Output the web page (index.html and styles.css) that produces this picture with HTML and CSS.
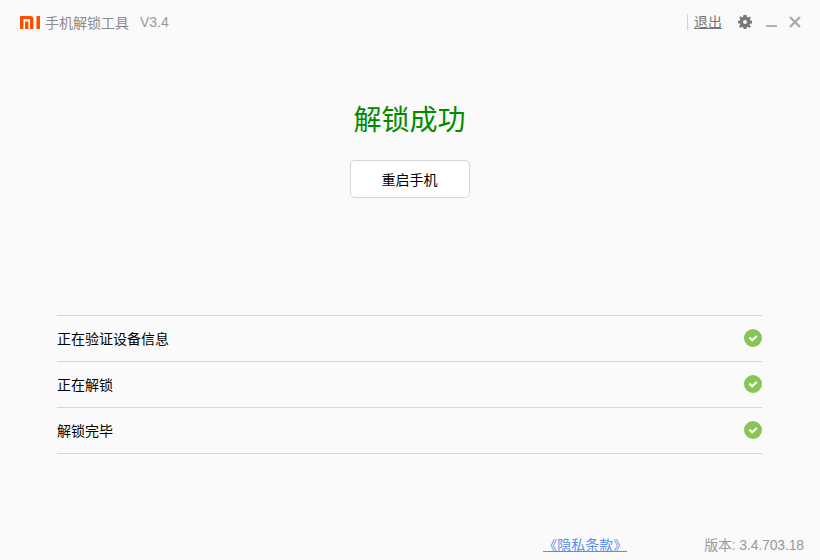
FILE: index.html
```html
<!DOCTYPE html>
<html lang="zh-CN">
<head>
    <meta charset="UTF-8">
    <title>手机解锁工具</title>
    <link rel="stylesheet" href="styles.css">
</head>
<body>
    <div class="window">
        <div class="glow"></div>

        <!-- 标题栏 -->
        <header class="titlebar">
            <svg class="logo" width="20" height="13" viewBox="0 0 20 13">
                <path fill="#ff5000" d="M0 0H10.5Q13.4 0 13.4 2.9V13H10V3.8Q10 3 9.2 3H3.4V13H0ZM5 5.5H8.4V13H5ZM16.4 0H20V13H16.4Z"/>
            </svg>
            <span class="app-name">手机解锁工具</span>
            <span class="app-version">V3.4</span>
            <div class="titlebar-right">
                <a class="logout" href="#">退出</a>
                <svg class="gear" width="14" height="14" viewBox="0 0 14 14">
                    <path fill="#777" fill-rule="evenodd" d="M5.4 0H8.6L9 1.9 10.2 2.5 11.9 1.4 13 3.3 11.7 4.6 12.1 5.6H14V8.4L12.1 8.7 11.5 9.9 12.9 11.2 11.5 13 9.9 11.8 8.8 12.3 8.5 14H5.5L5.1 12.2 4 11.7 2.4 12.9 1 11.2 2.3 9.8 1.9 8.6 0 8.2V5.7L1.9 5.4 2.4 4.2 1.1 2.8 2.6 1.2 4.1 2.4 5.1 1.8ZM7 5A2 2 0 1 0 7 9 2 2 0 1 0 7 5Z"/>
                </svg>
                <span class="minimize"></span>
                <svg class="close" width="12" height="12" viewBox="0 0 12 12">
                    <path stroke="#a8a8a8" stroke-width="2.2" d="M1 1L11 11M11 1L1 11"/>
                </svg>
            </div>
        </header>

        <main class="content">
            <h1 class="result-title">解锁成功</h1>
            <button class="reboot-btn">重启手机</button>

            <ul class="steps">
                <li class="step">
                    <span>正在验证设备信息</span>
                    <svg class="check" width="18" height="18" viewBox="0 0 18 18">
                        <circle cx="9" cy="9" r="9" fill="#88c557"/>
                        <path fill="none" stroke="#fff" stroke-width="2.2" d="M5.4 8.6L8.2 11.2 12.8 7"/>
                    </svg>
                </li>
                <li class="step">
                    <span>正在解锁</span>
                    <svg class="check" width="18" height="18" viewBox="0 0 18 18">
                        <circle cx="9" cy="9" r="9" fill="#88c557"/>
                        <path fill="none" stroke="#fff" stroke-width="2.2" d="M5.4 8.6L8.2 11.2 12.8 7"/>
                    </svg>
                </li>
                <li class="step">
                    <span>解锁完毕</span>
                    <svg class="check" width="18" height="18" viewBox="0 0 18 18">
                        <circle cx="9" cy="9" r="9" fill="#88c557"/>
                        <path fill="none" stroke="#fff" stroke-width="2.2" d="M5.4 8.6L8.2 11.2 12.8 7"/>
                    </svg>
                </li>
            </ul>
        </main>

        <footer class="footer">
            <a class="privacy" href="#">《隐私条款》</a>
            <span class="build">版本: 3.4.703.18</span>
        </footer>
    </div>
</body>
</html>
```

FILE: styles.css
```css
* {
    box-sizing: border-box;
}
body {
    margin: 0;
    background-color: #fafafa;
    color: #000;
    font-family: "Liberation Sans", "Noto Sans CJK SC", sans-serif;
}
.window {
    position: relative;
    display: flex;
    flex-direction: column;
    width: 820px;
    height: 560px;
    overflow: hidden;
}

/* 右上角的浅色背景 */
.glow {
    position: absolute;
    top: 0;
    left: 596px;
    width: 84px;
    height: 78px;
    background-color: #f9f9f9;
    border-radius: 0 0 34px 26px;
}

/* 标题栏 */
.titlebar {
    position: relative;
    display: flex;
    align-items: center;
    height: 45px;
    padding: 0 19px 2px 20px;
    font-size: 14px;
    color: #8a8a8a;
}
.logo {
    margin: 2px 5px 0 0;
}
.app-version {
    margin-left: 11px;
    color: #999;
}
.titlebar-right {
    display: flex;
    align-items: center;
    margin-left: auto;
}
.logout {
    padding-left: 6px;
    border-left: 1px solid #d4d4d4;
    color: #777;
    font-size: 14px;
    line-height: 16px;
}
.gear {
    margin-left: 16px;
}
.minimize {
    width: 11px;
    height: 2px;
    margin: 9px 0 0 14px;
    background-color: #b0b0b0;
}
.close {
    margin-left: 12px;
}

/* 内容 */
.content {
    display: flex;
    flex-direction: column;
    align-items: center;
    flex: 1;
    padding: 0 58px 0 57px;
}
.result-title {
    margin: 56px 0 0;
    color: #008a00;
    font-size: 28px;
    font-weight: normal;
    line-height: 40px;
}
.reboot-btn {
    width: 120px;
    height: 38px;
    margin-top: 19px;
    background-color: #fff;
    border: 1px solid #d6d6d6;
    border-radius: 5px;
    color: #000;
    font-family: inherit;
    font-size: 14px;
}
.steps {
    width: 100%;
    margin: 117px 0 0;
    padding: 0;
    list-style: none;
    border-top: 1px solid #d6d6d6;
}
.step {
    display: flex;
    align-items: center;
    justify-content: space-between;
    height: 46px;
    padding-bottom: 2px;
    border-bottom: 1px solid #d6d6d6;
    font-size: 14px;
}

/* 页脚 */
.footer {
    display: flex;
    align-items: center;
    justify-content: flex-end;
    height: 30px;
    padding: 0 16px 2px 0;
    font-size: 14px;
}
.privacy {
    color: #5b8def;
}
.build {
    margin-left: 77px;
    color: #999;
    letter-spacing: -0.15px;
}
```
